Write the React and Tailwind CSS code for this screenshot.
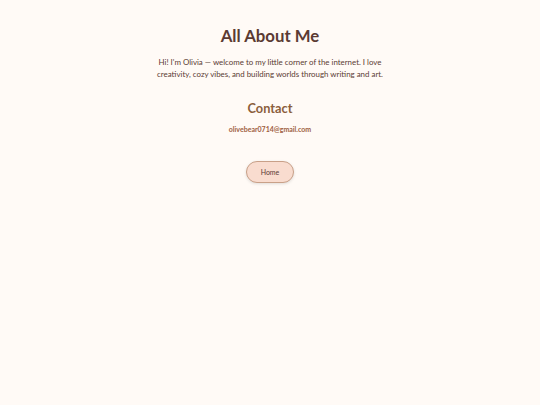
export default function App() {
  return (
    <div className="min-h-[405px] w-full bg-[#fffaf6] flex flex-col items-center pt-[25px]" style={{ fontFamily: '"Trebuchet MS", Lato, sans-serif' }}>
      <h1 className="text-[16.8px] font-bold text-[#5b3a33] leading-[22px]">All About Me</h1>
      <p className="mt-[9px] w-[230px] text-center text-[7.9px] leading-[12px] text-[#5b3a33]">
        Hi! I'm Olivia — welcome to my little corner of the internet. I love creativity, cozy vibes, and building worlds through writing and art.
      </p>
      <h2 className="mt-[20px] text-[12.8px] font-bold text-[#8b5e3c] leading-[16px]">Contact</h2>
      <p className="mt-[8px] text-[7px] font-bold text-[#a0603f] leading-[10px]">olivebear0714@gmail.com</p>
      <button className="mt-[27px] w-[48px] h-[22px] rounded-full bg-[#f9dccf] border border-[#c9a088] text-[7px] text-[#5b3a33] shadow-[0_1px_3px_rgba(0,0,0,0.12)]">Home</button>
    </div>
  );
}
